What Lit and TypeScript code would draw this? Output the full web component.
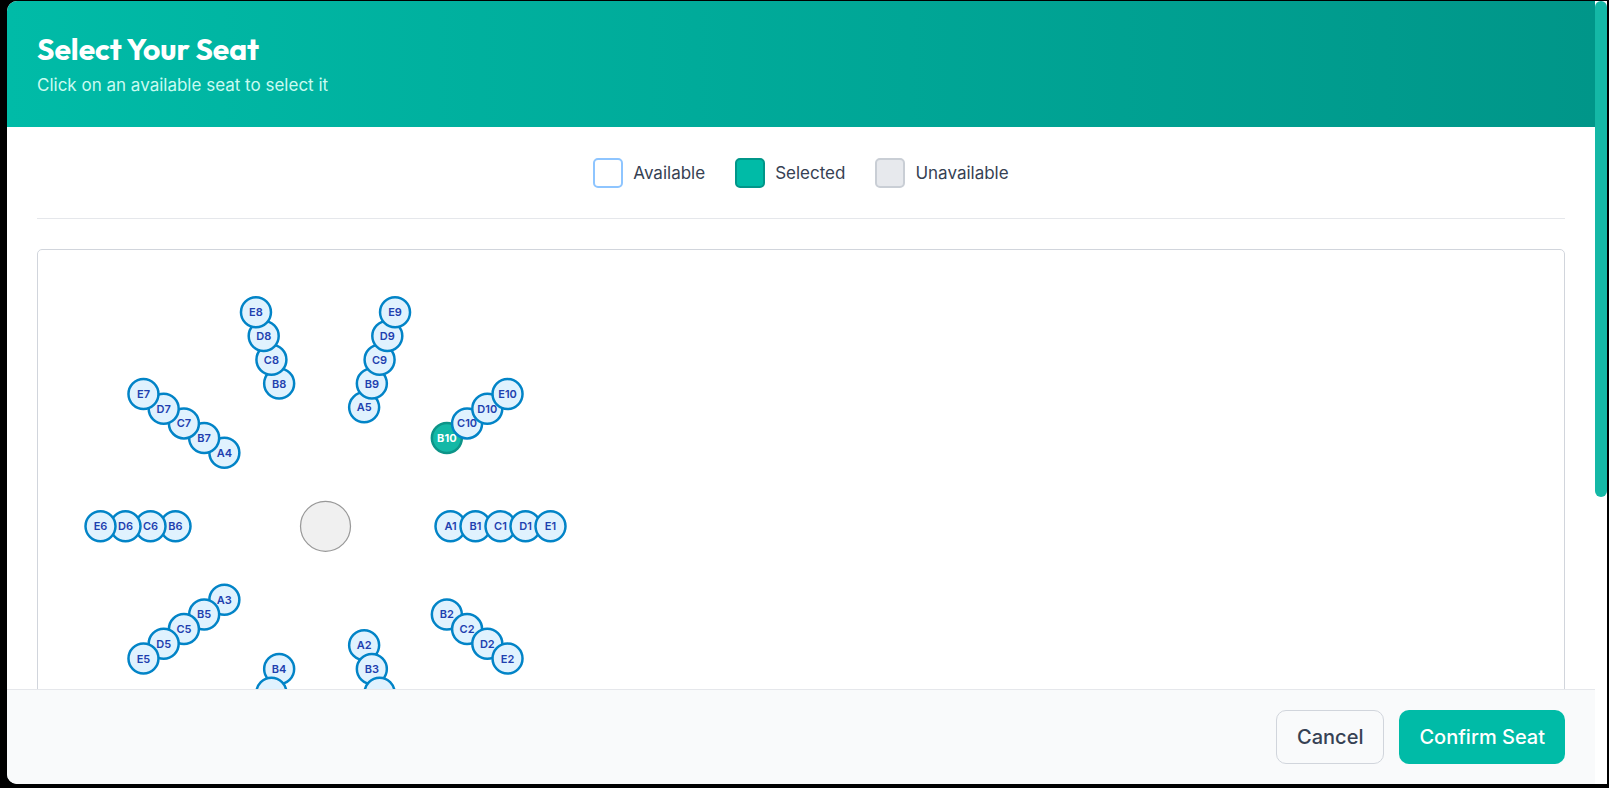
import { LitElement, html, css } from "lit";
import { customElement, property, state } from "lit/decorators.js";
import { classMap } from "lit/directives/class-map.js";

interface Seat {
  id: string;
  x: number;
  y: number;
}

/** Plan coordinates are multiplied by this factor on screen. */
const SCALE = 1.25;
const CENTER_X = 230;
const CENTER_Y = 221;
const INNER_RADIUS = 100;
const ROW_STEP = 20;
const ROWS: [string, number][] = [
  ["A", 5],
  ["B", 10],
  ["C", 10],
  ["D", 10],
  ["E", 10],
];

const place = (x: number, y: number) =>
  `transform:translate(${(x * SCALE).toFixed(2)}px,${(y * SCALE).toFixed(2)}px)`;

/** Seats of each row are spread evenly on a circle, clockwise from the right. */
function buildSeats(): Seat[] {
  return ROWS.flatMap(([row, count], ring) => {
    const radius = INNER_RADIUS + ring * ROW_STEP;
    return Array.from({ length: count }, (_, i) => {
      const angle = (i * 2 * Math.PI) / count;
      return {
        id: `${row}${i + 1}`,
        x: CENTER_X + radius * Math.cos(angle),
        y: CENTER_Y + radius * Math.sin(angle),
      };
    });
  });
}

@customElement("seat-map")
export class SeatMap extends LitElement {
  @property() selected = "";

  private seats = buildSeats();

  static styles = css`
    :host {
      display: block;
    }
    .canvas {
      position: relative;
      height: 552px;
    }
    .stage,
    .seat {
      position: absolute;
      top: 0;
      left: 0;
      display: grid;
      place-items: center;
      border-radius: 50%;
    }
    .stage {
      width: 54px;
      height: 54px;
      margin: -27px 0 0 -27px;
    }
    .seat {
      width: 34px;
      height: 34px;
      margin: -17px 0 0 -17px;
      padding: 0;
      border: 0;
      background: none;
      color: #1e40af;
      font: 600 11px/16px Inter, "Liberation Sans", sans-serif;
      cursor: pointer;
    }
    .seat > * {
      grid-area: 1 / 1;
    }
    .seat.selected {
      color: #fff;
      font-weight: 700;
    }
    svg {
      display: block;
    }
    .disc {
      fill: #e0f2fe;
      stroke: #0284c7;
      stroke-width: 2.5;
    }
    .selected .disc {
      fill: #14b8a6;
      stroke: #0d9488;
    }
    .stage-disc {
      fill: #f0f0f0;
      stroke: #999;
      stroke-width: 1.25;
    }
  `;

  render() {
    return html`<div class="canvas">
      <div class="stage" style=${place(CENTER_X, CENTER_Y)}>
        <svg width="54" height="54" aria-hidden="true">
          <circle class="stage-disc" cx="27" cy="27" r="25"></circle>
        </svg>
      </div>
      ${this.seats.map(
        (seat) => html`<button
          type="button"
          class=${classMap({ seat: true, selected: seat.id === this.selected })}
          style=${place(seat.x, seat.y)}
          aria-pressed=${seat.id === this.selected}
          @click=${() => this.pick(seat.id)}
        >
          <svg width="34" height="34" aria-hidden="true">
            <circle class="disc" cx="17" cy="17" r="15"></circle>
          </svg>
          <span>${seat.id}</span>
        </button>`
      )}
    </div>`;
  }

  private pick(id: string) {
    this.dispatchEvent(new CustomEvent("seat-pick", { detail: id }));
  }
}

@customElement("app-root")
export class AppRoot extends LitElement {
  @state() private selected = "B10";

  static styles = css`
    :host {
      display: block;
      box-sizing: border-box;
      height: 100vh;
      padding: 1px 2px 4px 7px;
      background: #000;
      font-family: Inter, "Liberation Sans", sans-serif;
      color: #364153;
    }
    * {
      box-sizing: border-box;
    }
    .modal {
      display: grid;
      grid-template-columns: minmax(0, 1fr) 12px;
      height: 100%;
      overflow: hidden;
      background: #fff;
      border-radius: 10px 0 0 10px;
    }
    .main {
      display: flex;
      flex-direction: column;
      min-height: 0;
    }
    .header {
      padding: 30px;
      background: linear-gradient(90deg, #00bba7, #009689);
    }
    .title {
      margin: 0 0 6px;
      color: #fff;
      font: 700 30px/36px Outfit, Lato, sans-serif;
    }
    .subtitle {
      margin: 0;
      color: #cbfbf1;
      font-size: 17px;
      line-height: 24px;
    }
    .body {
      flex: 1;
      min-height: 0;
      overflow: hidden;
      padding: 31px 30px;
    }
    .legend {
      display: flex;
      justify-content: center;
      gap: 30px;
      margin: 0 0 30px;
      padding: 0 0 30px;
      border-bottom: 1px solid #e5e7eb;
      list-style: none;
      font-size: 17px;
      line-height: 24px;
    }
    .entry {
      display: flex;
      align-items: center;
      gap: 10px;
    }
    .swatch {
      width: 30px;
      height: 30px;
      border: 2px solid #8ec5ff;
      border-radius: 5px;
      background: #fff;
    }
    .swatch.chosen {
      border-color: #009689;
      background: #00bba7;
    }
    .swatch.taken {
      border-color: #c9ced5;
      background: #e7e9ed;
    }
    .plan {
      border: 1px solid #d1d5dc;
      border-radius: 5px;
    }
    .footer {
      display: flex;
      justify-content: flex-end;
      gap: 15px;
      padding: 20px 30px;
      border-top: 1px solid #e5e7eb;
      background: #f9fafb;
    }
    .btn {
      padding: 11px 20px;
      border: 1px solid #d1d5dc;
      border-radius: 10px;
      background: transparent;
      color: #364153;
      font: 500 20px/30px Inter, "Liberation Sans", sans-serif;
      cursor: pointer;
    }
    .btn.primary {
      padding: 12px 20px;
      border: 0;
      background: #00bba7;
      color: #fff;
    }
    .track {
      background: #fff;
    }
    .thumb {
      height: 63.4%;
      border-radius: 6px;
      background: #14b8a6;
    }
  `;

  render() {
    return html`<div class="modal" role="dialog" aria-labelledby="title">
      <div class="main">
        <header class="header">
          <h2 class="title" id="title">Select Your Seat</h2>
          <p class="subtitle">Click on an available seat to select it</p>
        </header>
        <div class="body">
          <ul class="legend">
            <li class="entry"><span class="swatch"></span>Available</li>
            <li class="entry"><span class="swatch chosen"></span>Selected</li>
            <li class="entry"><span class="swatch taken"></span>Unavailable</li>
          </ul>
          <seat-map
            class="plan"
            .selected=${this.selected}
            @seat-pick=${(e: CustomEvent<string>) => (this.selected = e.detail)}
          ></seat-map>
        </div>
        <footer class="footer">
          <button type="button" class="btn" @click=${() => (this.selected = "")}>Cancel</button>
          <button type="button" class="btn primary">Confirm Seat</button>
        </footer>
      </div>
      <div class="track"><div class="thumb"></div></div>
    </div>`;
  }
}
